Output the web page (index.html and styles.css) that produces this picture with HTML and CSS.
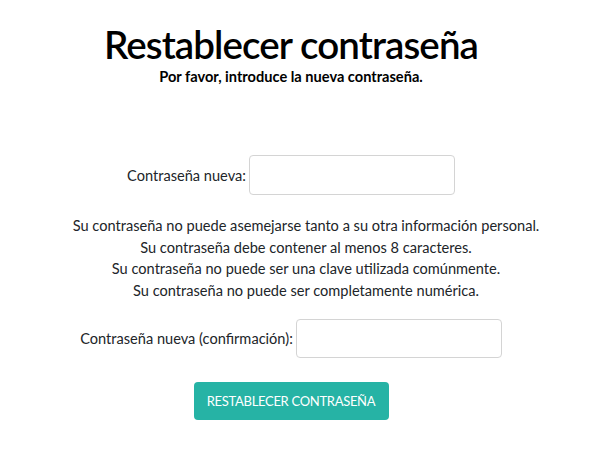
FILE: index.html
```html
<!DOCTYPE html>
<html lang="es">
<head>
<meta charset="utf-8">
<link rel="stylesheet" href="styles.css">
</head>
<body>
<main class="page">
  <h1 class="title">Restablecer contraseña</h1>
  <p class="subtitle">Por favor, introduce la nueva contraseña.</p>
  <form class="form">
    <div class="row row-first">
      <label class="label" for="p1">Contraseña nueva:</label>
      <input class="input" id="p1" type="password">
    </div>
    <ul class="help">
      <li>Su contraseña no puede asemejarse tanto a su otra información personal.</li>
      <li>Su contraseña debe contener al menos 8 caracteres.</li>
      <li>Su contraseña no puede ser una clave utilizada comúnmente.</li>
      <li>Su contraseña no puede ser completamente numérica.</li>
    </ul>
    <div class="row">
      <label class="label" for="p2">Contraseña nueva (confirmación):</label>
      <input class="input input-2" id="p2" type="password">
    </div>
    <div class="actions">
      <button class="btn" type="button">Restablecer contraseña</button>
    </div>
  </form>
</main>
</body>
</html>
```
FILE: styles.css
```css
* { box-sizing: border-box; }
html, body { margin: 0; padding: 0; background: #fff; }
body {
  font-family: Lato, "Open Sans", sans-serif;
  color: #212529;
  font-size: 14.6px;
}
.page {
  width: 591px;
  padding: 20px 9px 0 0;
  text-align: center;
}
.title {
  margin: 0;
  font-size: 38.5px;
  line-height: 48px;
  font-weight: 600;
  letter-spacing: -0.9px;
  color: #000;
}
.subtitle {
  margin: -1px 0 0;
  font-size: 14.6px;
  line-height: 20px;
  font-weight: 700;
  color: #000;
}
.form { margin-top: 68px; }
.row {
  display: flex;
  justify-content: center;
  align-items: center;
}
.label { margin-right: 3px; }
.input {
  width: 206px;
  height: 40px;
  border: 1px solid #d4d4d4;
  border-radius: 4px;
  background: #fff;
}
.input-2 { height: 39px; }
.help {
  list-style: none;
  margin: 20px 0 17px;
  padding: 0 0 0 30px;
  line-height: 21.7px;
}
.actions { margin-top: 24px; }
.btn {
  background: #26b3a5;
  color: #fff;
  border: 0;
  border-radius: 4px;
  width: 195px;
  height: 38px;
  font-family: inherit;
  font-size: 13px;
  letter-spacing: -0.3px;
  white-space: nowrap;
  text-transform: uppercase;
}
```
